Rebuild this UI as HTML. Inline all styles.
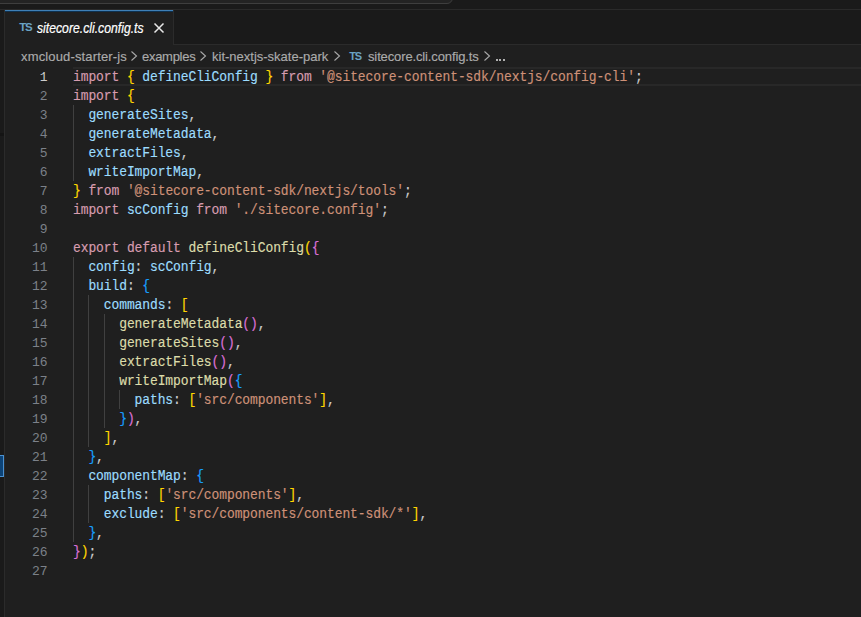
<!DOCTYPE html>
<html><head><meta charset="utf-8">
<style>
html,body{margin:0;padding:0;}
body{width:861px;height:617px;overflow:hidden;background:#1f1f1f;position:relative;font-family:"Liberation Sans",sans-serif;}
.abs{position:absolute;}
#title{position:absolute;left:0;top:0;width:861px;height:9px;background:#1a1a1a;}
#cmdbox{position:absolute;left:-10px;top:-10px;width:461px;height:12px;background:#232323;border:1px solid #3e3e3e;border-radius:6px;}
#titleline{position:absolute;left:0;top:9px;width:861px;height:1px;background:#2a2a2a;}
#tabs{position:absolute;left:0;top:10px;width:861px;height:34px;background:#1a1a1a;}
#tabsline{position:absolute;left:173px;top:44px;width:688px;height:1px;background:#2b2b2b;}
#tab{position:absolute;left:5px;top:10px;width:168px;height:35px;background:#1f1f1f;}
#tabtop{position:absolute;left:5px;top:10px;width:168px;height:1px;background:#3f80b6;border-bottom:1px solid #0e3150;}
#tabr{position:absolute;left:173px;top:10px;width:1px;height:35px;background:#2b2b2b;}
#leftstrip{position:absolute;left:0;top:10px;width:4px;height:607px;background:#1a1a1a;}
#leftline{position:absolute;left:4px;top:10px;width:1px;height:607px;background:#2b2b2b;}
.tsicon{position:absolute;font-family:"Liberation Sans",sans-serif;font-weight:bold;color:#6aa2c4;}
#tabtitle{position:absolute;left:37px;top:19px;font-size:13.5px;font-style:italic;color:#ffffff;line-height:19px;white-space:pre;transform-origin:0 14px;transform:scaleX(0.905) scaleY(1.07);-webkit-text-stroke:0.2px #fff;}
.bc{position:absolute;top:46px;font-size:13px;line-height:22px;color:#ababab;white-space:pre;-webkit-text-stroke:0.15px #ababab;}
.chev{position:absolute;}
#hl{position:absolute;left:73px;top:67px;width:788px;height:15px;border-top:2px solid #282828;border-bottom:2px solid #282828;}
.ln{position:absolute;left:73px;padding-top:1px;transform-origin:0 14px;transform:scaleY(1.08);-webkit-text-stroke:0.15px currentColor;height:19px;line-height:19px;font-family:"Liberation Mono",monospace;font-size:13px;letter-spacing:-0.105px;white-space:pre;color:#cccccc;}
.num{position:absolute;left:0;width:47.4px;padding-top:1px;transform-origin:0 14px;transform:scaleY(1.05);text-align:right;height:19px;line-height:19px;font-family:"Liberation Mono",monospace;font-size:13px;letter-spacing:-0.105px;color:#7c8189;}
.num.act{color:#cccccc;}
.guide{position:absolute;width:1px;background:#404040;}
#mark{position:absolute;left:-1px;top:455px;width:5px;height:22px;background:#0c4377;border:1px solid #4a90d0;box-sizing:border-box;}
#mark2{position:absolute;left:0;top:133px;width:4px;height:3px;background:#141414;}
</style></head><body>
<div id="title"></div>
<div id="cmdbox"></div>
<div id="titleline"></div>
<div id="tabs"></div>
<div id="tabsline"></div>
<div id="tab"></div>
<div id="tabtop"></div>
<div id="tabr"></div>
<div id="leftstrip"></div>
<div id="leftline"></div>
<div class="tsicon" style="left:19.3px;top:21px;font-size:11.5px;line-height:12px;letter-spacing:-1.4px;">TS</div>
<div id="tabtitle">sitecore.cli.config.ts</div>
<svg class="abs" style="left:153px;top:22px" width="12" height="12" viewBox="0 0 12 12"><path d="M1.5 1.5L10.5 10.5M10.5 1.5L1.5 10.5" stroke="#e8e8e8" stroke-width="1.5" fill="none"/></svg>
<div class="bc" style="left:21px;letter-spacing:0.15px">xmcloud-starter-js</div>
<svg class="abs chev" style="left:130px;top:50px" width="8" height="12" viewBox="0 0 8 12"><path d="M1.5 1.5L6.5 6L1.5 10.5" stroke="#a9a9a9" stroke-width="1.1" fill="none"/></svg>
<div class="bc" style="left:142px;letter-spacing:-0.28px">examples</div>
<svg class="abs chev" style="left:199px;top:50px" width="8" height="12" viewBox="0 0 8 12"><path d="M1.5 1.5L6.5 6L1.5 10.5" stroke="#a9a9a9" stroke-width="1.1" fill="none"/></svg>
<div class="bc" style="left:212px">kit-nextjs-skate-park</div>
<svg class="abs chev" style="left:333px;top:50px" width="8" height="12" viewBox="0 0 8 12"><path d="M1.5 1.5L6.5 6L1.5 10.5" stroke="#a9a9a9" stroke-width="1.1" fill="none"/></svg>
<div class="tsicon" style="left:349.2px;top:50px;font-size:11px;line-height:12px;letter-spacing:-1.2px;">TS</div>
<div class="bc" style="left:368px;letter-spacing:-0.13px">sitecore.cli.config.ts</div>
<svg class="abs chev" style="left:483px;top:50px" width="8" height="12" viewBox="0 0 8 12"><path d="M1.5 1.5L6.5 6L1.5 10.5" stroke="#a9a9a9" stroke-width="1.1" fill="none"/></svg>
<div class="abs" style="left:496px;top:59px;width:2px;height:2px;background:#b0b0b0"></div><div class="abs" style="left:499.3px;top:59px;width:2px;height:2px;background:#b0b0b0"></div><div class="abs" style="left:502.6px;top:59px;width:2px;height:2px;background:#b0b0b0"></div>
<div id="hl"></div>
<div class="guide" style="left:73.00px;top:105px;height:76px"></div><div class="guide" style="left:73.00px;top:257px;height:285px"></div><div class="guide" style="left:88.39px;top:295px;height:152px"></div><div class="guide" style="left:88.39px;top:485px;height:38px"></div><div class="guide" style="left:103.78px;top:314px;height:114px"></div><div class="guide" style="left:119.17px;top:390px;height:19px"></div>
<div class="ln" style="top:67px"><span style="color:#d79cb0">import</span><span style="color:#cccccc"> </span><span style="color:#ffd700">{</span><span style="color:#cccccc"> </span><span style="color:#9cdcfe">defineCliConfig</span><span style="color:#cccccc"> </span><span style="color:#ffd700">}</span><span style="color:#cccccc"> </span><span style="color:#d79cb0">from</span><span style="color:#cccccc"> </span><span style="color:#ce9178">'@sitecore-content-sdk/nextjs/config-cli'</span><span style="color:#cccccc">;</span></div><div class="num act" style="top:67px">1</div><div class="ln" style="top:86px"><span style="color:#d79cb0">import</span><span style="color:#cccccc"> </span><span style="color:#ffd700">{</span></div><div class="num" style="top:86px">2</div><div class="ln" style="top:105px"><span style="color:#cccccc">  </span><span style="color:#9cdcfe">generateSites</span><span style="color:#cccccc">,</span></div><div class="num" style="top:105px">3</div><div class="ln" style="top:124px"><span style="color:#cccccc">  </span><span style="color:#9cdcfe">generateMetadata</span><span style="color:#cccccc">,</span></div><div class="num" style="top:124px">4</div><div class="ln" style="top:143px"><span style="color:#cccccc">  </span><span style="color:#9cdcfe">extractFiles</span><span style="color:#cccccc">,</span></div><div class="num" style="top:143px">5</div><div class="ln" style="top:162px"><span style="color:#cccccc">  </span><span style="color:#9cdcfe">writeImportMap</span><span style="color:#cccccc">,</span></div><div class="num" style="top:162px">6</div><div class="ln" style="top:181px"><span style="color:#ffd700">}</span><span style="color:#cccccc"> </span><span style="color:#d79cb0">from</span><span style="color:#cccccc"> </span><span style="color:#ce9178">'@sitecore-content-sdk/nextjs/tools'</span><span style="color:#cccccc">;</span></div><div class="num" style="top:181px">7</div><div class="ln" style="top:200px"><span style="color:#d79cb0">import</span><span style="color:#cccccc"> </span><span style="color:#9cdcfe">scConfig</span><span style="color:#cccccc"> </span><span style="color:#d79cb0">from</span><span style="color:#cccccc"> </span><span style="color:#ce9178">'./sitecore.config'</span><span style="color:#cccccc">;</span></div><div class="num" style="top:200px">8</div><div class="ln" style="top:219px"></div><div class="num" style="top:219px">9</div><div class="ln" style="top:238px"><span style="color:#d79cb0">export</span><span style="color:#cccccc"> </span><span style="color:#d79cb0">default</span><span style="color:#cccccc"> </span><span style="color:#dcdcaa">defineCliConfig</span><span style="color:#ffd700">(</span><span style="color:#da70d6">{</span></div><div class="num" style="top:238px">10</div><div class="ln" style="top:257px"><span style="color:#cccccc">  </span><span style="color:#9cdcfe">config</span><span style="color:#cccccc">: </span><span style="color:#9cdcfe">scConfig</span><span style="color:#cccccc">,</span></div><div class="num" style="top:257px">11</div><div class="ln" style="top:276px"><span style="color:#cccccc">  </span><span style="color:#9cdcfe">build</span><span style="color:#cccccc">: </span><span style="color:#179fff">{</span></div><div class="num" style="top:276px">12</div><div class="ln" style="top:295px"><span style="color:#cccccc">    </span><span style="color:#9cdcfe">commands</span><span style="color:#cccccc">: </span><span style="color:#ffd700">[</span></div><div class="num" style="top:295px">13</div><div class="ln" style="top:314px"><span style="color:#cccccc">      </span><span style="color:#dcdcaa">generateMetadata</span><span style="color:#da70d6">()</span><span style="color:#cccccc">,</span></div><div class="num" style="top:314px">14</div><div class="ln" style="top:333px"><span style="color:#cccccc">      </span><span style="color:#dcdcaa">generateSites</span><span style="color:#da70d6">()</span><span style="color:#cccccc">,</span></div><div class="num" style="top:333px">15</div><div class="ln" style="top:352px"><span style="color:#cccccc">      </span><span style="color:#dcdcaa">extractFiles</span><span style="color:#da70d6">()</span><span style="color:#cccccc">,</span></div><div class="num" style="top:352px">16</div><div class="ln" style="top:371px"><span style="color:#cccccc">      </span><span style="color:#dcdcaa">writeImportMap</span><span style="color:#da70d6">(</span><span style="color:#179fff">{</span></div><div class="num" style="top:371px">17</div><div class="ln" style="top:390px"><span style="color:#cccccc">        </span><span style="color:#9cdcfe">paths</span><span style="color:#cccccc">: </span><span style="color:#ffd700">[</span><span style="color:#ce9178">'src/components'</span><span style="color:#ffd700">]</span><span style="color:#cccccc">,</span></div><div class="num" style="top:390px">18</div><div class="ln" style="top:409px"><span style="color:#cccccc">      </span><span style="color:#179fff">}</span><span style="color:#da70d6">)</span><span style="color:#cccccc">,</span></div><div class="num" style="top:409px">19</div><div class="ln" style="top:428px"><span style="color:#cccccc">    </span><span style="color:#ffd700">]</span><span style="color:#cccccc">,</span></div><div class="num" style="top:428px">20</div><div class="ln" style="top:447px"><span style="color:#cccccc">  </span><span style="color:#179fff">}</span><span style="color:#cccccc">,</span></div><div class="num" style="top:447px">21</div><div class="ln" style="top:466px"><span style="color:#cccccc">  </span><span style="color:#9cdcfe">componentMap</span><span style="color:#cccccc">: </span><span style="color:#179fff">{</span></div><div class="num" style="top:466px">22</div><div class="ln" style="top:485px"><span style="color:#cccccc">    </span><span style="color:#9cdcfe">paths</span><span style="color:#cccccc">: </span><span style="color:#ffd700">[</span><span style="color:#ce9178">'src/components'</span><span style="color:#ffd700">]</span><span style="color:#cccccc">,</span></div><div class="num" style="top:485px">23</div><div class="ln" style="top:504px"><span style="color:#cccccc">    </span><span style="color:#9cdcfe">exclude</span><span style="color:#cccccc">: </span><span style="color:#ffd700">[</span><span style="color:#ce9178">'src/components/content-sdk/*'</span><span style="color:#ffd700">]</span><span style="color:#cccccc">,</span></div><div class="num" style="top:504px">24</div><div class="ln" style="top:523px"><span style="color:#cccccc">  </span><span style="color:#179fff">}</span><span style="color:#cccccc">,</span></div><div class="num" style="top:523px">25</div><div class="ln" style="top:542px"><span style="color:#da70d6">}</span><span style="color:#ffd700">)</span><span style="color:#cccccc">;</span></div><div class="num" style="top:542px">26</div><div class="ln" style="top:561px"></div><div class="num" style="top:561px">27</div>
<div id="mark"></div>
<div id="mark2"></div>
</body></html>
